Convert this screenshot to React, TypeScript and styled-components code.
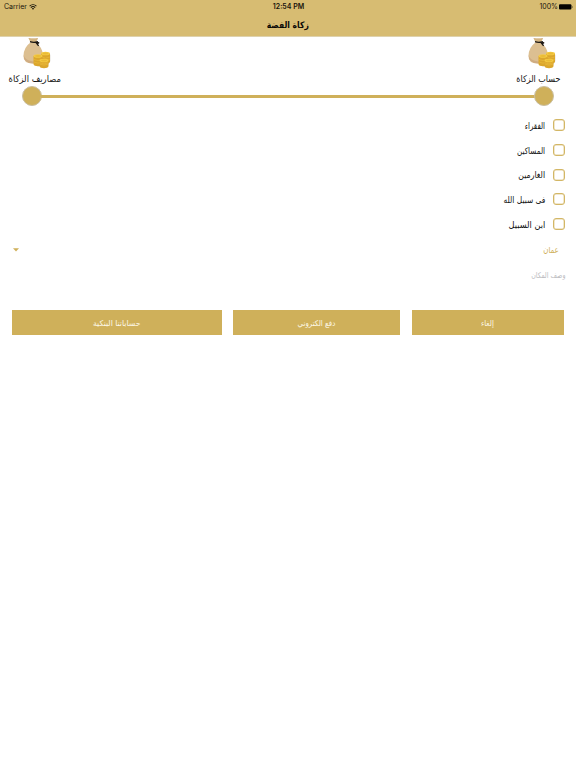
import React from "react";
import styled, { createGlobalStyle } from "styled-components";

const gold = "#cfb05a";

const GlobalStyle = createGlobalStyle`
  * { box-sizing: border-box; }
  body { margin: 0; background: #fff; font-family: "DejaVu Sans", sans-serif; }
`;

const Screen = styled.main`
  width: 576px;
  height: 768px;
  overflow: hidden;
  background: #fff;
  color: #111;
`;

const Header = styled.header`
  height: 37px;
  background: #d7bc72;
  border-bottom: 1px solid #ded2ae;
`;

const StatusBar = styled.div`
  height: 13px;
  padding: 0 3px 0 4px;
  display: grid;
  grid-template-columns: 1fr auto 1fr;
  align-items: center;
  font: 7px/13px Inter, sans-serif;
  color: #17140c;
`;

const StatusGroup = styled.div<{ $end?: boolean }>`
  display: flex;
  align-items: center;
  gap: ${(p) => (p.$end ? 1 : 2)}px;
  justify-content: ${(p) => (p.$end ? "flex-end" : "flex-start")};
`;

const Clock = styled.span`
  font-weight: 600;
`;

const Arabic = styled.span<{ $size: number; $stretch?: number; $origin?: string }>`
  display: inline-block;
  direction: rtl;
  white-space: nowrap;
  font-size: ${(p) => p.$size}px;
  line-height: 12px;
  transform: scaleX(${(p) => p.$stretch ?? 1});
  transform-origin: ${(p) => p.$origin ?? "center"};
`;

const Title = styled.h1`
  margin: 0;
  height: 24px;
  display: flex;
  justify-content: center;
  align-items: center;
  font-weight: 700;
  color: #090805;
`;

const Steps = styled.section`
  height: 69px;
  padding: 1px 8px 0 5px;
  display: grid;
  grid-template-columns: 60px 1fr 60px;
`;

const Step = styled.div`
  display: flex;
  flex-direction: column;
  align-items: center;
  width: 60px;
`;

const BagSlot = styled.div<{ $shift: number }>`
  height: 31px;
  margin-left: ${(p) => p.$shift}px;
`;

const StepLabel = styled.div`
  height: 14px;
  margin-top: 3px;
  padding-top: 1px;
  display: flex;
  justify-content: center;
`;

const Dot = styled.div<{ $shift: number }>`
  width: 20px;
  height: 20px;
  flex: none;
  margin: 0 0 0 ${(p) => p.$shift}px;
  border-radius: 50%;
  background: ${gold};
  border: 1px solid #c9bea0;
`;

const Track = styled.div`
  height: 3px;
  margin: 57px -27px 0 -24px;
  background: ${gold};
`;

const Options = styled.ul`
  list-style: none;
  margin: 0;
  padding: 7px 11px 0 0;
`;

const Option = styled.li`
  height: 24.7px;
  display: flex;
  justify-content: flex-end;
  align-items: center;
  gap: 8px;

  & > :first-child {
    padding-top: 1px;
  }
`;

const Checkbox = styled.span`
  width: 12px;
  height: 12px;
  border: 1.5px solid #d3b766;
  border-radius: 3px;
  box-shadow: inset 0 0 0 0.5px #e3d09c;
`;

const Select = styled.div`
  height: 26px;
  padding: 1px 17px 0 13px;
  display: flex;
  justify-content: space-between;
  align-items: center;
  color: #cfb05a;
`;

const Placeholder = styled.div`
  height: 26px;
  padding: 1px 11px 0 0;
  display: flex;
  justify-content: flex-end;
  align-items: center;
  color: #bcbcbf;
`;

const Actions = styled.div`
  margin-top: 22px;
  padding: 0 12px 0 11.5px;
  display: grid;
  grid-template-columns: 210px 167.5px 152.5px;
  column-gap: 11.3px;
`;

const Action = styled.button`
  height: 25px;
  padding: 2px 0 0;
  border: 0;
  border-radius: 0;
  display: flex;
  justify-content: center;
  align-items: center;
  background: ${gold};
  color: #fdf8e8;
  font-family: inherit;
`;

const Wifi = () => (
  <svg width="8" height="6" viewBox="0 0 16 12">
    <path d="M1.2 4.4a9.8 9.8 0 0 1 13.6 0M3.7 7.1a6.2 6.2 0 0 1 8.6 0" fill="none" stroke="#17140c" strokeWidth="2.1" />
    <path d="M5.6 9.1a3.5 3.5 0 0 1 4.8 0L8 11.6z" fill="#17140c" />
  </svg>
);

const Battery = () => (
  <svg width="14" height="6" viewBox="0 0 14 6">
    <rect x="0" y=".3" width="12.4" height="5.3" rx="1" fill="#050402" />
    <path d="M12.9 1.9q1.2 1 0 2.2z" fill="#050402" />
  </svg>
);

const Coins = ({ x, y, h }: { x: number; y: number; h: number }) => (
  <g transform={`translate(${x} ${y})`}>
    <path d={`M0 2v${h}c0 3 9 3 9 0V2z`} fill="#dba62c" />
    <path d={`M.3 ${h * 0.5 + 1.5}q4.2 2.3 8.4 0M.3 ${h}q4.2 2.3 8.4 0`} fill="none" stroke="#ecbd3d" strokeWidth=".6" />
    <ellipse cx="4.5" cy="2" rx="4.5" ry="1.8" fill="#f4cb43" />
    <ellipse cx="4.5" cy="2" rx="3" ry="1" fill="#eabb36" />
  </g>
);

const MoneyBag = () => (
  <svg width="28" height="31" viewBox="0 0 28 31">
    <path d="M11 26.5q7 4.5 14 .5l2.5-4V16l-3 8q-4 4-13 2z" fill="#e4e1dc" />
    <path d="M5.5 0q5 1 9.500 0l-2 4.500q6.500 5 7 12.500 0 8.500-10 8.500T.5 17.500Q1 9 7.500 4.500z" fill="#dcbf91" />
    <path d="M.5 17q.3 8.500 9.500 8.500 5 0 8-2.500-6 1-10 0-6-1-7.500-6z" fill="#cfac82" />
    <path d="M5.500 0q5 1 9.500 0l-2 4H8z" fill="#d4b582" />
    <path d="M7 3.700q4 1.400 8-.1M12.600 4.200l3.600 .8M13 4.500l2.600 3.300" fill="none" stroke="#1c1713" strokeWidth="1.300" />
    <Coins x={18} y={13.5} h={8} />
    <Coins x={10.5} y={16} h={8} />
    <Coins x={16.500} y={20.500} h={5.500} />
  </svg>
);

const options = [
  { text: "الفقراء", stretch: 0.78 },
  { text: "المساكين", stretch: 0.8 },
  { text: "الغارمين", stretch: 0.86 },
  { text: "فى سبيل الله", stretch: 0.83 },
  { text: "ابن السبيل", stretch: 0.91 },
];

const actions = [
  { text: "حساباتنا البنكية", stretch: 0.96 },
  { text: "دفع الكتروني", stretch: 0.88 },
  { text: "إلغاء", stretch: 0.88 },
];

export default function App() {
  return (
    <Screen>
      <GlobalStyle />
      <Header>
        <StatusBar>
          <StatusGroup>Carrier <Wifi /></StatusGroup>
          <Clock>12:54 PM</Clock>
          <StatusGroup $end>100% <Battery /></StatusGroup>
        </StatusBar>
        <Title><Arabic $size={9} $stretch={0.85}>زكاة الفضة</Arabic></Title>
      </Header>
      <Steps>
        <Step>
          <BagSlot $shift={4}><MoneyBag /></BagSlot>
          <StepLabel><Arabic $size={9.2} $stretch={0.91}>مصاريف الزكاة</Arabic></StepLabel>
          <Dot $shift={-6} />
        </Step>
        <Track />
        <Step>
          <BagSlot $shift={7}><MoneyBag /></BagSlot>
          <StepLabel><Arabic $size={9.2} $stretch={0.87}>حساب الزكاة</Arabic></StepLabel>
          <Dot $shift={12} />
        </Step>
      </Steps>
      <Options>
        {options.map((o) => (
          <Option key={o.text}>
            <Arabic $size={9} $stretch={o.stretch} $origin="right">{o.text}</Arabic>
            <Checkbox />
          </Option>
        ))}
      </Options>
      <Select>
        <svg width="6" height="4" viewBox="0 0 6 4"><path d="M0 .2h6L3 3.5z" fill={gold} /></svg>
        <Arabic $size={8.5} $stretch={0.83} $origin="right">عمان</Arabic>
      </Select>
      <Placeholder><Arabic $size={8} $stretch={0.79} $origin="right">وصف المكان</Arabic></Placeholder>
      <Actions>
        {actions.map((a) => (
          <Action key={a.text}><Arabic $size={8} $stretch={a.stretch}>{a.text}</Arabic></Action>
        ))}
      </Actions>
    </Screen>
  );
}
